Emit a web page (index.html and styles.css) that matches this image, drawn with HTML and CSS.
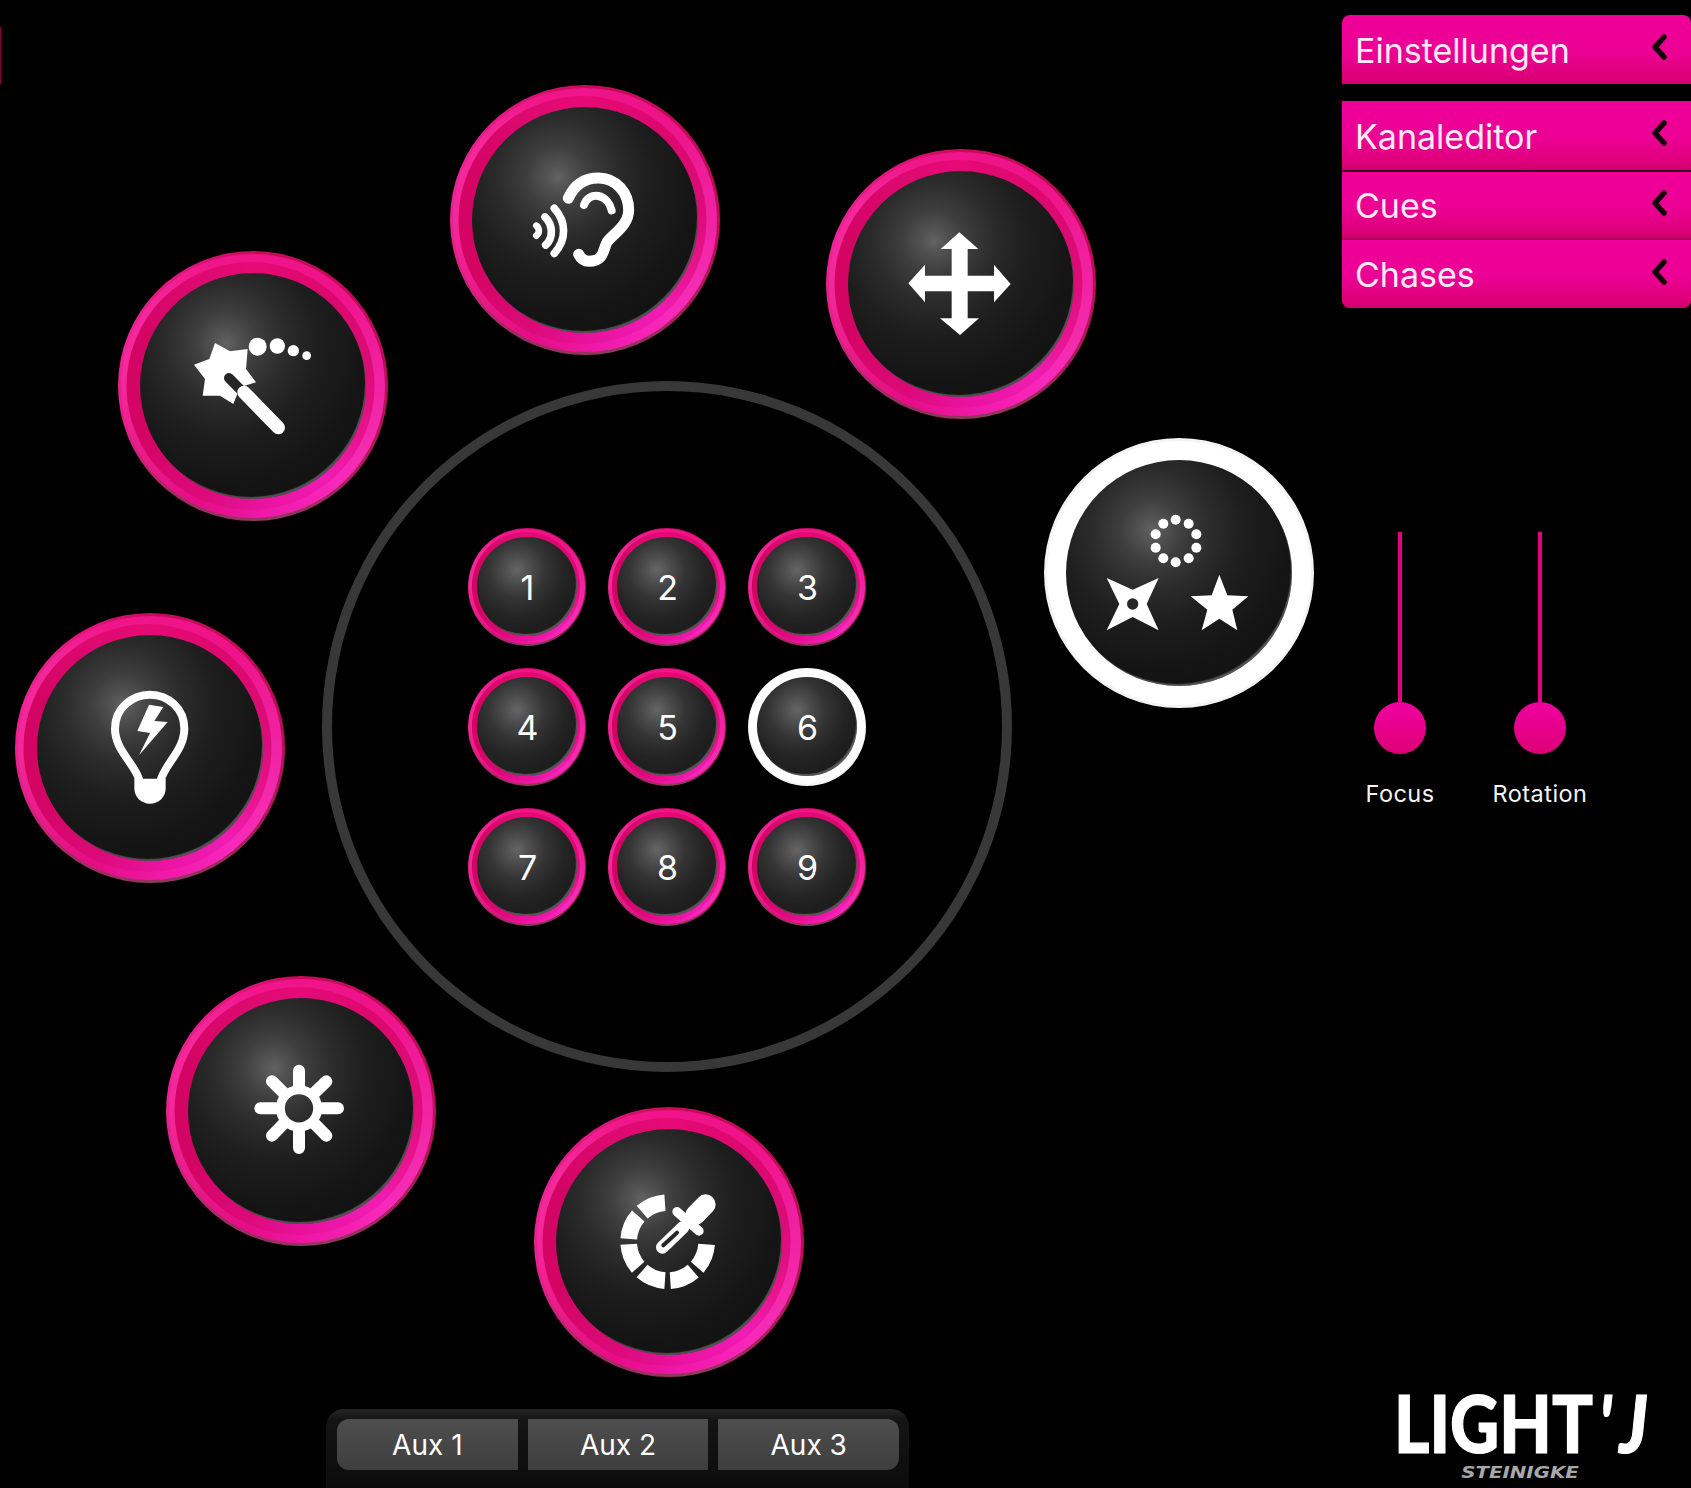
FILE: index.html
```html
<!DOCTYPE html>
<html lang="de">
<head>
<meta charset="utf-8">
<title>Light'J</title>
<link rel="stylesheet" href="styles.css">
</head>
<body>
<div class="app">
  <span class="edge-mark"></span>
  <main class="wheel-area">
    <button class="knob knob-big pos-ear">
      <span class="face"></span>
      <svg class="icon" viewBox="30 45 810 810"><g class="ln">
        <path stroke-width="33" d="M385 385C405 340 440 324 475 324C530 324 566 370 566 420C566 465 522 490 502 515C490 532 495 574 447 574C432 574 422 565 416 553"/>
        <path stroke-width="24" d="M432 405C440 382 458 375 475 378C495 382 510 400 515 421"/>
        <path stroke-width="20" d="M289 467C299 475 299 490 289 497"/>
        <path stroke-width="23" d="M315 441C340 465 340 505 317 525"/>
        <path stroke-width="23" d="M343 415C380 455 380 510 343 550"/>
      </g></svg>
    </button>
    <button class="knob knob-big pos-move">
      <span class="face"></span>
      <svg class="icon" viewBox="48 45 810 810"><polygon class="fl" points="448,295 505,345 473,345 473,425 552,425 552,392 602,450 552,505 552,472 473,472 473,553 507,553 450,603 390,553 425,553 425,472 345,472 345,505 295,448 345,392 345,425 425,425 425,345 392,345"/></svg>
    </button>
    <button class="knob knob-big pos-wand">
      <span class="face"></span>
      <svg class="icon" viewBox="54 31 810 810">
        <polygon class="fl" points="345,307 390,332 443,325 438,385 468,425 420,440 400,490 360,465 308,465 315,415 282,372 328,355"/>
        <path class="ln-dark" stroke-width="30" d="M387 412L432 458"/>
        <path class="ln" stroke-width="40" d="M432 455L535 561"/>
        <circle class="fl" cx="473" cy="318" r="27"/><circle class="fl" cx="532" cy="316" r="23"/><circle class="fl" cx="580" cy="330" r="17"/><circle class="fl" cx="620" cy="345" r="13"/>
      </svg>
    </button>
    <button class="knob knob-big pos-bulb">
      <span class="face"></span>
      <svg class="icon" viewBox="45 38 810 810">
        <path class="ln" stroke-width="24" d="M418 540C405 490 345 450 345 385C345 325 395 283 450 283C505 283 553 325 553 385C553 450 495 490 482 540"/>
        <path class="fl" d="M403 535H497V565C497 590 475 610 450 610C425 610 403 590 403 565Z"/>
        <polygon class="fl" points="447,313 490,320 463,362 503,365 417,465 450,398 412,392"/>
      </svg>
    </button>
    <button class="knob knob-big pos-sun">
      <span class="face"></span>
      <svg class="icon" viewBox="49 41 810 810">
        <circle class="ln" cx="448" cy="438" r="56" stroke-width="27"/>
        <g class="ln" stroke-width="36"><path d="M448 370V325M448 506V557M380 438H332M516 438H565"/></g>
        <g class="ln" stroke-width="36"><path d="M400 390L367 357M496 390L530 357M400 486L367 520M496 486L530 520"/></g>
      </svg>
    </button>
    <button class="knob knob-big pos-drop">
      <span class="face"></span>
      <svg class="icon" viewBox="43 21 810 810">
        <path class="dash" pathLength="262" d="M560.7 433.2A117 117 0 1 1 435.8 308.3"/>
        <path class="ln" stroke-width="60" d="M527 345L558 313"/>
        <path class="ln" stroke-width="28" d="M472 335L538 393"/>
        <path class="ln" stroke-width="38" d="M490 382L428 442"/>
        <path class="ln-dark" stroke-width="12" d="M472 398L431 436"/>
      </svg>
    </button>
    <button class="knob knob-big knob-active pos-gobo">
      <span class="face"></span>
      <svg class="icon" viewBox="42 55 810 810">
        <g class="fl"><circle cx="437" cy="300" r="15"/><circle cx="476" cy="312" r="15"/><circle cx="499" cy="344" r="15"/><circle cx="499" cy="384" r="15"/><circle cx="476" cy="416" r="15"/><circle cx="437" cy="428" r="15"/><circle cx="400" cy="416" r="15"/><circle cx="377" cy="384" r="15"/><circle cx="377" cy="344" r="15"/><circle cx="400" cy="312" r="15"/>
        <polygon points="230,475 308,510 386,475 350,553 386,632 308,592 230,632 268,553"/>
        <polygon points="568,465 592,527 655,530 607,570 622,632 568,597 515,632 532,570 482,530 545,527"/></g>
        <circle class="hole" cx="308" cy="553" r="17"/>
      </svg>
    </button>

    <section class="ring">
      <div class="pad">
        <button class="knob knob-small"><span class="face">1</span></button>
        <button class="knob knob-small"><span class="face">2</span></button>
        <button class="knob knob-small"><span class="face">3</span></button>
        <button class="knob knob-small"><span class="face">4</span></button>
        <button class="knob knob-small"><span class="face">5</span></button>
        <button class="knob knob-small knob-active"><span class="face">6</span></button>
        <button class="knob knob-small"><span class="face">7</span></button>
        <button class="knob knob-small"><span class="face">8</span></button>
        <button class="knob knob-small"><span class="face">9</span></button>
      </div>
    </section>

    <nav class="aux">
      <button class="aux-btn aux-first">Aux 1</button>
      <button class="aux-btn">Aux 2</button>
      <button class="aux-btn aux-last">Aux 3</button>
    </nav>
  </main>

  <aside class="side">
    <div class="menu">
      <div class="menu-item item-single"><span>Einstellungen</span><svg class="chev" viewBox="0 0 16 26"><path d="M13 3L4 13L13 23"/></svg></div>
    </div>
    <div class="menu menu-group">
      <div class="menu-item item-kanal"><span>Kanaleditor</span><svg class="chev" viewBox="0 0 16 26"><path d="M13 3L4 13L13 23"/></svg></div>
      <div class="menu-item item-cues"><span>Cues</span><svg class="chev" viewBox="0 0 16 26"><path d="M13 3L4 13L13 23"/></svg></div>
      <div class="menu-item item-chases"><span>Chases</span><svg class="chev" viewBox="0 0 16 26"><path d="M13 3L4 13L13 23"/></svg></div>
    </div>

    <div class="sliders">
      <div class="slider"><span class="track"></span><span class="thumb"></span><label>Focus</label></div>
      <div class="slider"><span class="track"></span><span class="thumb"></span><label>Rotation</label></div>
    </div>

    <div class="logo">
      <div class="logo-main"><span>LIGHT</span><span class="logo-apos">'</span><span class="logo-j">J</span></div>
      <div class="logo-sub">STEINIGKE</div>
    </div>
  </aside>
</div>
</body>
</html>
```
FILE: styles.css
```css
* { box-sizing: border-box; }
html, body { margin: 0; background: #000; }
body { font-family: Inter, "Liberation Sans", sans-serif; color: #fff; }
button { font: inherit; color: inherit; border: 0; margin: 0; }

.app {
  position: relative;
  display: grid;
  grid-template-columns: 1342px 349px;
  width: 1691px;
  height: 1488px;
  overflow: hidden;
  background: #000;
}
.edge-mark { position: absolute; left: 0; top: 27px; width: 1px; height: 57px; background: #8a0048; }

/* wheel */
.wheel-area { position: relative; padding: 381px 0 0 322px; }
.ring {
  width: 690px;
  height: 691px;
  border: 10px solid #383838;
  border-radius: 50%;
  display: flex;
  align-items: center;
  justify-content: center;
}
.pad { display: grid; grid-template-columns: repeat(3, 118px); grid-auto-rows: 118px; gap: 22px; }

/* knobs: three stacked discs make the bevelled rim */
.knob {
  --size: 270px;
  position: relative;
  isolation: isolate;
  display: grid;
  width: var(--size);
  height: var(--size);
  padding: calc(var(--size) * .08);
  border-radius: 50%;
  cursor: pointer;
  background: conic-gradient(#c80c58 0deg, #c40a58 45deg, #b80f58 90deg, #a8205c 135deg, #8a3a5c 170deg, #a02a60 215deg, #e02088 250deg, #ee2495 290deg, #de1478 335deg, #c80c58 360deg);
}
.knob::before,
.knob::after {
  content: "";
  position: absolute;
  z-index: -1;
  border-radius: 50%;
}
.knob::before {
  inset: 1%;
  background: conic-gradient(#f0148a 0deg, #ee1388 40deg, #f020a0 80deg, #f42cb0 120deg, #f828bc 140deg, #ef18a8 175deg, #e60c86 205deg, #ea1a88 235deg, #f4289a 270deg, #f4289a 305deg, #f0168a 340deg, #f0148a 360deg);
}
.knob::after {
  inset: 4%;
  transform: translateX(-1%);
  background: conic-gradient(#e60a76 0deg, #dc086e 40deg, #dc0c78 85deg, #e8148f 115deg, #f01cb4 140deg, #ea12a0 175deg, #dc0a78 205deg, #d40464 245deg, #d40464 295deg, #dd0a70 335deg, #e60a76 360deg);
}
.knob-big { position: absolute; }
.knob-small { --size: 118px; }

.face {
  display: flex;
  align-items: center;
  justify-content: center;
  border-radius: 50%;
  font-size: 34px;
  line-height: 1;
  background: radial-gradient(circle at 38% 31%, #626262 0, #525252 6%, #3e3e3e 15%, #2c2c2c 28%, #1e1e1e 44%, #151515 66%, #0e0e0e 100%);
  box-shadow: inset -2px -3px 1px -1px rgba(170, 170, 170, .42);
}
.knob-small .face {
  padding: 3px 0 0 1px;
  background: radial-gradient(circle at 40% 33%, #666 0, #4e4e4e 14%, #343434 32%, #232323 54%, #151515 100%);
}
.knob-active { background: #f4f4f4; }
.knob-active::before,
.knob-active::after { background: #fff; }

.icon { position: absolute; inset: 0; z-index: 1; width: 100%; height: 100%; }
.fl { fill: #fff; }
.ln, .ln-dark { fill: none; stroke: #fff; stroke-linecap: round; stroke-linejoin: round; }
.ln-dark { stroke: #262626; }
.hole { fill: #262626; }
.dash { fill: none; stroke: #fff; stroke-width: 50; stroke-dasharray: 37 8; }

.pos-ear  { left: 450px; top: 85px; }
.pos-move { left: 826px; top: 149px; }
.pos-wand { left: 118px; top: 251px; }
.pos-bulb { left: 15px;  top: 613px; }
.pos-sun  { left: 166px; top: 976px; }
.pos-drop { left: 534px; top: 1107px; }
.pos-gobo { left: 1044px; top: 438px; }

/* aux */
.aux {
  display: flex;
  gap: 10px;
  width: 583px;
  height: 80px;
  margin: 337px 0 0 4px;
  padding: 10px 10px 0 11px;
  border-radius: 18px 18px 0 0;
  background: linear-gradient(#262626, #141414 14%, #0c0c0c 100%);
}
.aux-btn {
  flex: 1;
  height: 51px;
  font-size: 28px;
  color: #fff;
  background: linear-gradient(#4e4e4e, #3e3e3e);
}
.aux-first { border-radius: 12px 0 0 12px; }
.aux-last { border-radius: 0 12px 12px 0; }

/* side */
.side { display: flex; flex-direction: column; padding-top: 15px; min-width: 0; }
.menu { display: flex; flex-direction: column; gap: 2px; }
.menu-group {
  margin-top: 17px;
  border-radius: 0 0 8px 8px;
  background: linear-gradient(#300020 50%, #a8005c 50%);
}
.menu-item {
  display: flex;
  align-items: center;
  justify-content: space-between;
  padding: 1px 24px 0 13px;
  font-size: 34px;
  color: #ffeaf6;
  background: linear-gradient(#ee0099 0, #ec0094 55%, #dd0078 90%, #cf006c 100%);
}
.item-single { height: 69px; border-radius: 8px 8px 0 0; }
.item-kanal { height: 69px; }
.item-cues { height: 66px; }
.item-chases { height: 68px; border-radius: 0 0 8px 8px; }
.chev { width: 16px; height: 26px; margin-bottom: 6px; }
.chev path { fill: none; stroke: #12020a; stroke-width: 5.5; stroke-linecap: round; stroke-linejoin: round; }

.sliders { display: flex; gap: 40px; margin: 224px 0 0 8px; }
.slider { display: flex; flex-direction: column; align-items: center; width: 100px; }
.track { width: 4px; height: 170px; background: #e4007f; }
.thumb { width: 52px; height: 52px; border-radius: 50%; background: linear-gradient(#f000a0, #dd0076); }
.slider label { margin-top: 25px; font-size: 23.5px; line-height: 29px; letter-spacing: .45px; white-space: nowrap; color: #f4f4f4; }

/* logo */
.logo { margin-top: auto; padding: 0 0 7px 52px; }
.logo-main {
  display: flex;
  height: 70px;
  font-family: Lato, sans-serif;
  font-weight: 900;
  font-size: 80px;
  line-height: 57px;
  -webkit-text-stroke: 1.2px #fff;
  transform: scaleX(.85);
  transform-origin: left center;
  white-space: nowrap;
}
.logo-apos { margin-left: 6px; font-style: italic; font-weight: 700; }
.logo-j { margin-left: 9px; font-style: italic; }
.logo-sub {
  width: 252px;
  text-align: center;
  font-family: "DejaVu Sans", sans-serif;
  font-weight: 700;
  font-style: italic;
  font-size: 15px;
  line-height: 18px;
  transform: scaleX(1.32);
  color: #a8a8a8;
}
```
